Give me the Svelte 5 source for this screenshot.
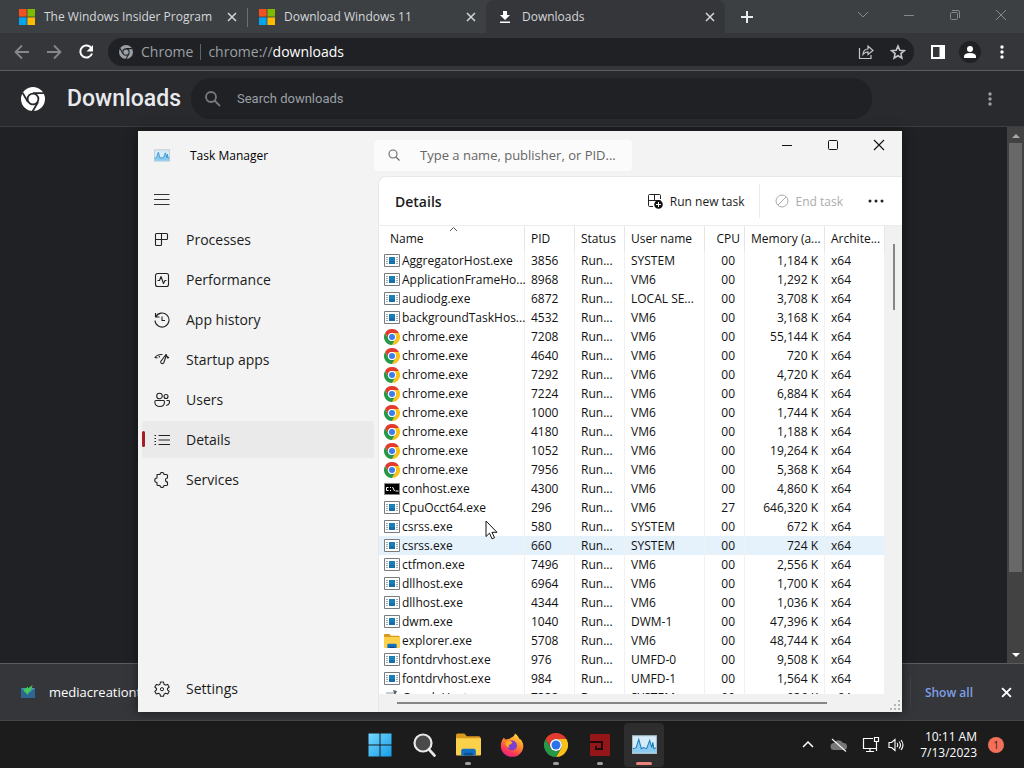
<script lang="ts">
	type Proc = { name: string; pid: string; user: string; cpu: string; mem: string; icon: string };

	const p = (name: string, pid: string, user: string, mem: string, icon = 'app', cpu = '00'): Proc => ({ name, pid, user, cpu, mem, icon });

	const processes: Proc[] = [
		p('AggregatorHost.exe', '3856', 'SYSTEM', '1,184 K'),
		p('ApplicationFrameHo...', '8968', 'VM6', '1,292 K'),
		p('audiodg.exe', '6872', 'LOCAL SE...', '3,708 K'),
		p('backgroundTaskHos...', '4532', 'VM6', '3,168 K'),
		p('chrome.exe', '7208', 'VM6', '55,144 K', 'chrome'),
		p('chrome.exe', '4640', 'VM6', '720 K', 'chrome'),
		p('chrome.exe', '7292', 'VM6', '4,720 K', 'chrome'),
		p('chrome.exe', '7224', 'VM6', '6,884 K', 'chrome'),
		p('chrome.exe', '1000', 'VM6', '1,744 K', 'chrome'),
		p('chrome.exe', '4180', 'VM6', '1,188 K', 'chrome'),
		p('chrome.exe', '1052', 'VM6', '19,264 K', 'chrome'),
		p('chrome.exe', '7956', 'VM6', '5,368 K', 'chrome'),
		p('conhost.exe', '4300', 'VM6', '4,860 K', 'console'),
		p('CpuOcct64.exe', '296', 'VM6', '646,320 K', 'app', '27'),
		p('csrss.exe', '580', 'SYSTEM', '672 K'),
		p('csrss.exe', '660', 'SYSTEM', '724 K'),
		p('ctfmon.exe', '7496', 'VM6', '2,556 K'),
		p('dllhost.exe', '6964', 'VM6', '1,700 K'),
		p('dllhost.exe', '4344', 'VM6', '1,036 K'),
		p('dwm.exe', '1040', 'DWM-1', '47,396 K'),
		p('explorer.exe', '5708', 'VM6', '48,744 K', 'folder'),
		p('fontdrvhost.exe', '976', 'UMFD-0', '9,508 K'),
		p('fontdrvhost.exe', '984', 'UMFD-1', '1,564 K'),
		p('GoogleHost.exe', '7332', 'SYSTEM', '936 K', 'file')
	];
	let hovered = $state(15);

	const pages = [
		{ label: 'Processes', d: 'M2.5 1.5h10q1 0 1 1v4q0 1-1 1h-5v5q0 1-1 1h-4q-1 0-1-1v-10q0-1 1-1zM1.5 7.5h6M7.5 1.5v6' },
		{ label: 'Performance', d: 'M3.5 1.5h9a2 2 0 0 1 2 2v9a2 2 0 0 1-2 2h-9a2 2 0 0 1-2-2v-9a2 2 0 0 1 2-2zM3.5 8.5h2l1.5-4 2.5 7 1.5-3h1.5' },
		{ label: 'App history', d: 'M1.5 1v4h4M1.7 5A7 7 0 1 1 1 8.5M8 4.5v4h3' },
		{ label: 'Startup apps', d: 'M.8 6C2 3.5 5 2.3 8.5 2.5M12 3.5l3 2.5M1 5.5l2.5.5M14.8 5.8l-2 .2M12 2.5L7.5 8.5a1.7 1.7 0 1 0 2.6 1.3L12.5 3zM5.5 4L5 5.5' },
		{ label: 'Users', d: 'M5.5 1.2a2.8 2.8 0 1 1 0 5.6 2.8 2.8 0 0 1 0-5.6zM12 2.5a2 2 0 1 1 0 4 2 2 0 0 1 0-4zM2 8.5h7.5q1 0 1 1.5c0 3-2 4.5-4.8 4.5S.8 13 .8 10q0-1.5 1.2-1.5zM12.5 8.5h2q1 0 1 1.2c0 2.4-1.5 3.8-3.5 3.6' },
		{ label: 'Details', d: 'M4.5 3.5H16M4.5 8H16M4.5 12.5H16M.5 3.5h1.5M.5 6.5h1.5M.5 9.5h1.5M.5 12.5h1.5' },
		{ label: 'Services', d: 'M3 2.5h3a2 2 0 0 1 4 0h2.5q1 0 1 1V6a1.8 1.8 0 0 0 0 4v2.5q0 1-1 1H10a2 2 0 0 1-4 0H4q-1 0-1-1V10.5a2.2 2.2 0 0 1 0-4.5z' }
	];
	let current = $state('Details');
</script>

<svelte:head>
	<title>Downloads</title>
</svelte:head>

{#snippet chromeLogo(red: string, yellow: string, green: string, ring: string, dot: string)}
	<path fill={red} d="M12 6h10.4A12 12 0 0 0 1.6 6l5.2 9A6 6 0 0 1 12 6z" />
	<path fill={yellow} d="M22.4 6A12 12 0 0 1 12 24l5.2-9A6 6 0 0 0 12 6z" />
	<path fill={green} d="M1.6 6A12 12 0 0 0 12 24l5.2-9a6 6 0 0 1-10.4 0z" />
	<circle cx="12" cy="12" r="6" fill={ring} />
	<circle cx="12" cy="12" r="4.5" fill={dot} />
{/snippet}

{#snippet chromeMono(ink: string, bg: string)}
	<circle cx="12" cy="12" r="12" fill={ink} />
	<path d="M12 6.2h11M6.9 15L1.5 5.6M17.1 15l-5.6 9.5" stroke={bg} stroke-width="1.8" />
	<circle cx="12" cy="12" r="5.4" fill={ink} stroke={bg} stroke-width="1.8" />
{/snippet}

{#snippet cross()}
	<svg width="10" height="10" viewBox="0 0 10 10"><path d="M1 1l8 8M9 1L1 9" stroke="currentColor" stroke-width="1.5" /></svg>
{/snippet}

{#snippet msLogo()}
	<svg width="16" height="16" viewBox="0 0 16 16">
		<path fill="#f25022" d="M0 0h7.6v7.6H0z" /><path fill="#7fba00" d="M8.4 0H16v7.6H8.4z" />
		<path fill="#00a4ef" d="M0 8.4h7.6V16H0z" /><path fill="#ffb900" d="M8.4 8.4H16V16H8.4z" />
	</svg>
{/snippet}

{#snippet folder(size: number)}
	<svg width={size} height={size} viewBox="0 0 24 24">
		<path fill="#d99a1c" d="M0 3q0-1.5 1.5-1.500H8L10.5 4H22q1.5 0 1.5 1.5V12H0z" />
		<path fill="#fbd04b" d="M0 6h24v15.5q0 1-1 1H1q-1 0-1-1z" />
		<path fill="#1270c4" d="M5 22.500V18q0-2 2-2h10q2 0 2 2v4.5z" />
		<path fill="#0a4f94" d="M8 20h8v2.500H8z" />
	</svg>
{/snippet}

{#snippet graph(w: number, h: number)}
	<svg width={w} height={h} viewBox="0 0 24 18">
		<path fill="#d6ecf8" stroke="#a8bccb" d="M.5.5h23v17H.5z" />
		<path fill="#8ccbf0" d="M1 17v-4l3-1 2.500-8L9 13l2-1 3 1 3-8 2 7 1-5 1 6 2-1v5z" />
		<path fill="none" stroke="#1b7fc0" d="M1 13l3-1 2.500-8L9 13l2-1 3 1 3-8 2 7 1-5 1 6 2-1" />
	</svg>
{/snippet}

{#snippet procIcon(kind: string)}
	{#if kind === 'chrome'}
		<svg width="16" height="16" viewBox="0 0 24 24">{@render chromeLogo('#e33b2e', '#fbc116', '#279847', '#fff', '#3b7ded')}</svg>
	{:else if kind === 'console'}
		<svg width="16" height="16" viewBox="0 0 16 16">
			<path fill="#000" stroke="#888" d="M.5 2.500h15v11H.5z" />
			<path fill="none" stroke="#fff" d="M4.500 6.500h-2v3h2M6.500 6v1M6.500 9v1M8.500 6l2 4M11.500 10h3" />
		</svg>
	{:else if kind === 'folder'}
		{@render folder(16)}
	{:else if kind === 'file'}
		<svg width="16" height="16" viewBox="0 0 16 16"><path fill="#c6ccd4" d="M2 2h10v12H2z" /><path fill="#59636f" d="M9 0l4 1-2 5z" /></svg>
	{:else}
		<svg width="16" height="16" viewBox="0 0 16 16">
			<path fill="#fff" stroke="#777c80" d="M.5 1.500h15v12H.5z" />
			<path stroke="#a3a7aa" d="M2 4.500h2M2 6.500h2M2 8.500h2M2 10.500h2M12 4.500h2M12 6.500h2M12 8.500h2M12 10.500h2" />
			<path fill="#1a7fb8" d="M5 4h6v7H5z" /><path fill="#156fa8" d="M5 8h6v3H5z" />
		</svg>
	{/if}
{/snippet}

<div class="desktop">
	<nav class="tabs" aria-label="Tabs">
		<div class="tab">
			{@render msLogo()}
			<a href="#insider">The Windows Insider Program</a>
			<button aria-label="Close tab">{@render cross()}</button>
		</div>
		<div class="tab divided">
			{@render msLogo()}
			<a href="#win11">Download Windows 11</a>
			<button aria-label="Close tab">{@render cross()}</button>
		</div>
		<div class="tab active">
			<svg width="16" height="16" viewBox="0 0 16 16"><path fill="#fff" d="M6 2h4v4h3L8 11 3 6h3zM3 12.500h10V14H3z" /></svg>
			<a href="#downloads">Downloads</a>
			<button aria-label="Close tab">{@render cross()}</button>
		</div>
		<button class="new-tab" aria-label="New tab">
			<svg width="12" height="12" viewBox="0 0 12 12"><path d="M6 0v12M0 6h12" stroke="currentColor" stroke-width="2" /></svg>
		</button>
		<div class="win-buttons">
			<button aria-label="Search tabs"><svg width="12" height="12" viewBox="0 0 12 12"><path d="M1 3l5 5 5-5" fill="none" stroke="currentColor" /></svg></button>
			<button aria-label="Minimize"><svg width="12" height="12" viewBox="0 0 12 12"><path d="M1 6.500h10" stroke="currentColor" /></svg></button>
			<button aria-label="Restore"><svg width="12" height="12" viewBox="0 0 12 12"><path d="M3 1.500h6q1.500 0 1.500 1.500v6M2.500 3.500h5q1 0 1 1v5q0 1-1 1h-5q-1 0-1-1v-5q0-1 1-1z" fill="none" stroke="currentColor" /></svg></button>
			<button aria-label="Close"><svg width="12" height="12" viewBox="0 0 12 12"><path d="M1 1l10 10M11 1L1 11" stroke="currentColor" /></svg></button>
		</div>
	</nav>

	<div class="toolbar">
		<button class="tool dim" aria-label="Back"><svg width="16" height="16" viewBox="0 0 16 16"><path d="M15 8H2M8 1.500L1.500 8 8 14.500" fill="none" stroke="currentColor" stroke-width="1.8" /></svg></button>
		<button class="tool dim" aria-label="Forward"><svg width="16" height="16" viewBox="0 0 16 16"><path d="M1 8h13M8 1.500L14.500 8 8 14.500" fill="none" stroke="currentColor" stroke-width="1.8" /></svg></button>
		<button class="tool" aria-label="Reload"><svg width="16" height="16" viewBox="0 0 16 16"><path d="M13.500 4.500A6 6 0 1 0 14 9.500" fill="none" stroke="currentColor" stroke-width="2" /><path fill="currentColor" d="M15 1v6.500H8.500z" /></svg></button>
		<div class="omnibox">
			<svg width="14" height="14" viewBox="0 0 24 24">{@render chromeMono('#9aa0a6', '#202124')}</svg>
			<span class="origin">Chrome</span>
			<label for="url">chrome://</label>
			<input id="url" value="downloads" />
			<button aria-label="Share"><svg width="16" height="16" viewBox="0 0 16 16"><path d="M1.500 4v10.500h11.500V11M5 10.500c.3-4 2-5.500 5-5.500V2l5 4.500-5 4V7.800c-2 0-3.500.7-5 2.700z" fill="none" stroke="currentColor" stroke-width="1.2" /></svg></button>
			<button aria-label="Bookmark"><svg width="16" height="16" viewBox="0 0 16 16"><path d="M8 2l1.800 4.200 4.500.4-3.400 3 1 4.400L8 11.700 4.100 14l1-4.400-3.400-3 4.500-.4z" fill="none" stroke="currentColor" stroke-width="1.6" /></svg></button>
		</div>
		<button class="tool" aria-label="Side panel"><svg width="14" height="14" viewBox="0 0 14 14"><path fill="currentColor" fill-rule="evenodd" d="M0 0h14v14H0zM2 2v10h6.500V2z" /></svg></button>
		<button class="tool" aria-label="Profile"><svg width="22" height="22" viewBox="0 0 22 22"><circle cx="11" cy="11" r="11" fill="#202124" /><circle cx="11" cy="8" r="3" fill="#fff" /><path fill="#fff" d="M5 17v-1.500q0-3.500 6-3.500t6 3.500V17z" /></svg></button>
		<button class="tool" aria-label="Menu"><svg width="4" height="14" viewBox="0 0 4 14"><g fill="currentColor"><circle cx="2" cy="2" r="1.7" /><circle cx="2" cy="7" r="1.7" /><circle cx="2" cy="12" r="1.7" /></g></svg></button>
	</div>

	<header class="page-head">
		<svg width="24" height="24" viewBox="0 0 24 24">{@render chromeMono('#fff', '#292a2d')}</svg>
		<h1>Downloads</h1>
		<div class="find">
			<svg width="16" height="16" viewBox="0 0 16 16"><path d="M6 1a5 5 0 1 1 0 10A5 5 0 0 1 6 1zM10 10l5 5" fill="none" stroke="#77797d" stroke-width="1.8" /></svg>
			<input aria-label="Search downloads" placeholder="Search downloads" />
		</div>
		<button class="more" aria-label="More actions"><svg width="4" height="14" viewBox="0 0 4 14"><g fill="currentColor"><circle cx="2" cy="2" r="1.7" /><circle cx="2" cy="7" r="1.7" /><circle cx="2" cy="12" r="1.7" /></g></svg></button>
	</header>

	<main class="page">
		<div class="page-scroll">
			<svg width="8" height="16" viewBox="0 0 8 16"><path fill="#a8a8a8" d="M0 11l4-4 4 4z" /></svg>
			<div class="page-thumb"></div>
			<svg width="8" height="16" viewBox="0 0 8 16"><path fill="#fff" d="M0 6h8l-4 4z" /></svg>
		</div>
	</main>

	<div class="shelf">
		<svg width="14" height="14" viewBox="0 0 14 14">
			<path fill="#4b91b8" d="M0 3h14v10H0z" /><path fill="#2d6791" d="M0 3l7 6 7-6v10H0z" />
			<path fill="#3ed04f" d="M11.500 0L7 3.500V1.500L2.500 5.500 7 10V7.500Q11 5 11.500 0z" />
		</svg>
		<a class="file" href="#file">mediacreationtool.exe</a>
		<button class="show-all">Show all</button>
		<button class="shelf-close" aria-label="Close"><svg width="11" height="11" viewBox="0 0 10 10"><path d="M1 1l8 8M9 1L1 9" stroke="currentColor" stroke-width="1.7" /></svg></button>
	</div>

	<footer class="taskbar">
		<div class="apps">
			<button aria-label="Start">
				<svg width="24" height="24" viewBox="0 0 24 24">
					<defs><linearGradient id="win" x1="0" y1="0" x2="1" y2="1"><stop offset="0" stop-color="#74d8ff" /><stop offset="1" stop-color="#159ce8" /></linearGradient></defs>
					<path fill="url(#win)" d="M.5.5h11v11H.5zM12.500.5h11v11h-11zM.5 12.500h11v11H.5zM12.500 12.500h11v11h-11z" />
				</svg>
			</button>
			<button aria-label="Search"><svg width="24" height="24" viewBox="0 0 24 24"><circle cx="11" cy="10" r="8.5" fill="#4a4a4a" stroke="#e8e8e8" stroke-width="2.2" /><path d="M17 16.500l5.500 6" stroke="#e8e8e8" stroke-width="2.6" stroke-linecap="round" /></svg></button>
			<button class="running" aria-label="File Explorer">{@render folder(25)}</button>
			<button aria-label="Firefox">
				<svg width="24" height="24" viewBox="0 0 24 24">
					<defs><linearGradient id="fox" x1=".8" y1="0" x2=".3" y2="1"><stop offset="0" stop-color="#ffe14a" /><stop offset=".4" stop-color="#ff9526" /><stop offset=".8" stop-color="#fb3558" /><stop offset="1" stop-color="#e3218c" /></linearGradient></defs>
					<path fill="url(#fox)" d="M15 .5c3 2 3.500 4 4.500 5.500q1.500.2 2 1.500c1 1.500 1.800 3.500 1.800 5.500a11.200 10.800 0 0 1-22.500 0C.8 9.500 2 6.500 4 4.500l1 2 4-.5c2-1.500 5-2 6-5.500z" />
					<circle cx="12" cy="12.5" r="5" fill="#7c3fd0" /><path fill="#ffab24" d="M5.500 9.500c3-2.500 6-1.500 7 0l-2 2-2 .5 1 2.500c-2 0-4-1.500-4-5z" />
				</svg>
			</button>
			<button class="running" aria-label="Chrome"><svg width="24" height="24" viewBox="0 0 24 24">{@render chromeLogo('#e33b2e', '#fbc116', '#279847', '#fff', '#2b72e8')}</svg></button>
			<button class="running" aria-label="OCCT"><svg width="22" height="24" viewBox="0 0 22 24"><path fill="#941619" d="M1 2q0-1 1-1h18q1 0 1 1v20q0 1-1 1H2q-1 0-1-1z" /><path fill="#1c0a0a" d="M1 8h13v9H6v-4h2v2h4v-5H1z" /></svg></button>
			<button class="running focused" aria-label="Task Manager">{@render graph(25, 19)}</button>
		</div>
		<div class="tray">
			<button aria-label="Hidden icons"><svg width="12" height="12" viewBox="0 0 12 12"><path d="M1 8l5-5 5 5" fill="none" stroke="#fff" stroke-width="1.5" /></svg></button>
			<button class="cloud" aria-label="OneDrive"><svg width="18" height="14" viewBox="0 0 18 14"><path fill="#777" d="M4 12a3.500 3.500 0 0 1 0-7 5 5 0 0 1 9 0 3.500 3.500 0 0 1 1 7z" /><path d="M2 1l14 12.500" stroke="#eee" stroke-width="1.2" /></svg></button>
			<button aria-label="Network"><svg width="18" height="18" viewBox="0 0 18 18"><path d="M11 2.500H1.500v10h13V9M8 12.500v3M4 15.500h8M12.500 1.500h4v4h-4zM14.500 6v9" fill="none" stroke="#fff" stroke-width="1.2" /></svg></button>
			<button aria-label="Volume"><svg width="16" height="16" viewBox="0 0 16 16"><path d="M1 5.500h2.500L7 2.500v11L3.500 10.500H1zM9 6q1.500 2 0 4M11 4.500q3 3.500 0 7M13 3q4 5 0 10" fill="none" stroke="#fff" stroke-width="1.1" /></svg></button>
			<div class="clock"><time>10:11 AM</time><time>7/13/2023</time></div>
			<span class="badge">1</span>
		</div>
	</footer>

	<section class="window" aria-label="Task Manager">
		<aside class="side">
			<div class="brand">{@render graph(16, 13)}<span>Task Manager</span></div>
			<button class="nav" aria-label="Toggle navigation"><svg width="16" height="16" viewBox="0 0 16 16"><path d="M0 2.500h15.500M0 7.500h15.500M0 12.500h15.500" stroke="#333" /></svg></button>
			{#each pages as page}
				<button class="nav" class:selected={page.label === current} onclick={() => current = page.label}>
					<svg width="16" height="16" viewBox="0 0 16 16"><path d={page.d} fill="none" stroke="#222" stroke-width="1.1" stroke-linejoin="round" /></svg>
					{page.label}
				</button>
			{/each}
			<button class="nav settings">
				<svg width="16" height="16" viewBox="0 0 16 16"><path d="M6.500 1h3l.5 2.200 1.500.9 2.200-.7 1.500 2.600L13.500 7.500v1.300l1.700 1.500-1.500 2.600-2.200-.7-1.500.9-.5 2.200h-3L6 13.100l-1.500-.9-2.200.7L.8 10.300l1.700-1.500V7.500L.8 6l1.500-2.600 2.200.7L6 3.200z" fill="none" stroke="#222" stroke-width="1.1" stroke-linejoin="round" /><circle cx="8" cy="8.2" r="1.6" fill="none" stroke="#222" /></svg>
				Settings
			</button>
		</aside>

		<div class="body">
			<div class="title-row">
				<div class="task-search">
					<svg width="12" height="12" viewBox="0 0 12 12"><path d="M5 1a4 4 0 1 1 0 8 4 4 0 0 1 0-8zM8 8l3.500 3.500" fill="none" stroke="#666" stroke-width="1.1" /></svg>
					<input aria-label="Search processes" placeholder="Type a name, publisher, or PID..." />
				</div>
				<div class="controls">
					<button aria-label="Minimize"><svg width="12" height="12" viewBox="0 0 12 12"><path d="M1 6.500h10" stroke="#111" /></svg></button>
					<button aria-label="Maximize"><svg width="12" height="12" viewBox="0 0 12 12"><rect x="1.5" y="1.5" width="9" height="9" rx="1" fill="none" stroke="#111" /></svg></button>
					<button aria-label="Close"><svg width="12" height="12" viewBox="0 0 12 12"><path d="M1 1l10 10M11 1L1 11" stroke="#111" stroke-width="1.1" /></svg></button>
				</div>
			</div>

			<div class="panel">
				<div class="panel-head">
					<h2>Details</h2>
					<button class="action">
						<svg width="16" height="16" viewBox="0 0 16 16"><path d="M13.500 6V2.500q0-1-1-1h-10q-1 0-1 1v10q0 1 1 1H6M1.500 7.500h6.500M7.500 1.500v6h6" fill="none" stroke="#222" /><circle cx="11.5" cy="11.5" r="4.3" fill="#111" /><path d="M11.500 9v5M9 11.500h5" stroke="#fff" /></svg>
						Run new task
					</button>
					<button class="action end" disabled>
						<svg width="14" height="14" viewBox="0 0 14 14"><circle cx="7" cy="7" r="6" fill="none" stroke="#aaa" /><path d="M3 11l8-8" stroke="#aaa" /></svg>
						End task
					</button>
					<button class="dots" aria-label="See more"><svg width="16" height="4" viewBox="0 0 16 4"><g fill="#222"><circle cx="2" cy="2" r="1.5" /><circle cx="8" cy="2" r="1.5" /><circle cx="14" cy="2" r="1.5" /></g></svg></button>
				</div>

				<div class="list">
					<div class="rows">
						<table>
							<colgroup>
								<col class="c-name" /><col class="c-pid" /><col class="c-pid" /><col class="c-user" /><col class="c-cpu" /><col class="c-user" /><col class="c-arch" />
							</colgroup>
							<thead>
								<tr>
									<th>
										<svg class="caret" width="9" height="6" viewBox="0 0 9 6"><path d="M1 5l3.500-3.500L8 5" fill="none" stroke="#555" /></svg>
										Name
									</th>
									<th>PID</th><th>Status</th><th>User name</th><th class="num">CPU</th><th>Memory (a...</th><th>Archite...</th>
								</tr>
							</thead>
							<tbody>
								{#each processes as proc, i}
									<tr class:hovered={i === hovered} onmouseenter={() => hovered = i}>
										<td><span class="proc">{@render procIcon(proc.icon)}{proc.name}</span></td>
										<td>{proc.pid}</td>
										<td>Run...</td>
										<td>{proc.user}</td>
										<td class="cpu">{proc.cpu}</td>
										<td class="num">{proc.mem}</td>
										<td>x64</td>
									</tr>
								{/each}
							</tbody>
						</table>
					</div>
					<div class="v-scroll"><div></div></div>
					<div class="h-scroll"><div></div></div>
					<svg class="grip" width="10" height="10" viewBox="0 0 10 10"><path fill="#b5b5b5" d="M8 0h2v2H8zM4 4h2v2H4zM8 4h2v2H8zM0 8h2v2H0zM4 8h2v2H4zM8 8h2v2H8z" /></svg>
				</div>
			</div>
		</div>

		<svg class="pointer" width="13" height="20" viewBox="0 0 13 20"><path fill="#fff" stroke="#111" d="M1 1v15.500l3.500-3.300 2.500 5.600 2.500-1.100-2.500-5.400H12z" /></svg>
	</section>
</div>

<style>
	:global(body) { background: #202124; }
	.desktop {
		position: relative; overflow: hidden; height: 100vh; min-height: 560px;
		display: grid; grid-template-rows: 33px 38px 56px 1fr 58px 47px;
		grid-template-columns: minmax(0,1fr);
		font-family: "Open Sans", "Noto Sans", sans-serif; font-size: 12px;
		background: #202124; color: #e8eaed;
	}
	.desktop * { box-sizing: border-box; }
	button { border: none; background: none; padding: 0; margin: 0; font: inherit; color: inherit; display: flex; align-items: center; justify-content: center; }
	input { border: none; background: none; padding: 0; margin: 0; font: inherit; color: inherit; outline: none; min-width: 0; flex: 1; }
	a { color: inherit; text-decoration: none; }
	svg { display: block; flex: none; }

	/* Browser */
	.tabs { display: flex; background: #3c4043; padding-left: 8px; }
	.tab { width: 239px; display: flex; align-items: center; gap: 9px; padding: 0 10px 0 11px; color: #d5d7da; }
	.tab a { flex: 1; white-space: nowrap; }
	.divided { border-left: 1px solid; border-image: linear-gradient(transparent 25%, #6b6f73 25%, #6b6f73 80%, transparent 80%) 1; }
	.active { background: #35363a; border-radius: 8px 8px 0 0; }
	.new-tab { width: 44px; }
	.win-buttons { margin-left: auto; display: flex; color: #85898c; height: 29px; }
	.win-buttons button { width: 46px; }

	.toolbar { display: flex; align-items: center; background: #35363a; border-bottom: 1px solid #5b5c60; padding: 0 6px; }
	.tool { width: 32px; height: 28px; color: #fff; }
	.dim { color: #85878a; }
	.omnibox {
		flex: 1; min-width: 0; height: 28px; margin: 0 8px 0 6px; padding: 0 0 0 11px; border-radius: 14px;
		background: #202124; display: flex; align-items: center; color: #9aa0a6; font-size: 14px;
	}
	.origin { margin: 0 7px 0 8px; padding-right: 7px; border-right: 1px solid #5f6368; line-height: 16px; }
	.omnibox input { color: #fff; }
	.omnibox button { width: 32px; color: #c4c7ca; }

	.page-head { display: flex; align-items: center; background: #292a2d; border-bottom: 1px solid #3c3d40; padding: 0 32px 0 21px; font-family: Roboto, sans-serif; }
	.page-head h1 { margin: 0 12px 0 22px; font-size: 23px; font-weight: 500; width: 112px; white-space: nowrap; color: #e8eaed; }
	.find { flex: 1; max-width: 681px; height: 41px; border-radius: 20px; background: #202124; display: flex; align-items: center; gap: 16px; padding: 0 14px; }
	.find input { font-size: 13px; }
	.find input::placeholder { color: #9aa0a6; opacity: 1; }
	.more { margin-left: auto; color: #9aa0a6; }

	.page { display: flex; justify-content: flex-end; min-height: 0; }
	.page-scroll { width: 17px; background: #424242; display: flex; flex-direction: column; align-items: center; }
	.page-thumb { width: 13px; height: 80%; background: #686868; margin-bottom: auto; }

	.shelf { display: flex; align-items: center; background: #35363a; border-top: 1px solid #5b5c60; border-bottom: 1px solid #444548; padding: 0 12px 0 21px; }
	.file { margin-left: 14px; font-size: 13px; color: #fff; flex: 1; }
	.show-all { color: #7e9fe6; font-weight: 600; padding-left: 14px; border-left: 1px solid #3f4043; height: 32px; }
	.shelf-close { margin-left: 28px; color: #fff; }

	/* Taskbar */
	.taskbar { display: grid; grid-template-columns: 1fr auto 1fr; align-items: center; background: #1c1c1c; }
	.apps { grid-column: 2; display: flex; }
	.apps button { width: 44px; height: 44px; position: relative; border-radius: 4px; }
	.running::after { content: ""; position: absolute; bottom: 2px; width: 6px; height: 3px; border-radius: 2px; background: #a0a0a0; }
	.apps .focused { width: 40px; margin: 0 2px; background: #2e2e2e; }
	.apps .focused::after { width: 16px; background: #e8847c; }
	.tray { display: flex; align-items: center; justify-content: flex-end; gap: 8px; padding-right: 20px; }
	.cloud { margin: 0 6px 0 8px; }
	.clock { display: flex; flex-direction: column; align-items: flex-end; font-size: 12px; line-height: 16px; color: #fff; margin: 0 3px 0 8px; }
	.badge { width: 16px; height: 16px; border-radius: 8px; background: #f0705a; color: #44150e; font-size: 10px; line-height: 16px; text-align: center; }

	/* Task Manager window */
	.window {
		position: absolute; top: 131px; right: 122px; bottom: 56px; left: 138px;
		display: grid; grid-template-columns: 236px minmax(0,1fr); grid-template-rows: minmax(0,1fr);
		background: #f3f3f3; color: #1b1b1b; box-shadow: 0 0 10px rgba(0,0,0,0.5);
	}
	.side { display: flex; flex-direction: column; gap: 3px; padding: 0 0 5px 4px; }
	.brand { display: flex; align-items: center; gap: 20px; height: 47px; padding: 2px 0 0 12px; color: #000; }
	.nav { height: 37px; justify-content: flex-start; gap: 16px; padding-left: 12px; font-size: 14px; position: relative; border-radius: 3px; }
	.selected { background: #eaeaea; }
	.selected::before { content: ""; position: absolute; left: 0; top: 10px; width: 3px; height: 16px; border-radius: 2px; background: #a51d23; }
	.settings { margin-top: auto; }

	.body { display: grid; grid-template-rows: 45px minmax(0,1fr); min-width: 0; }
	.title-row { display: flex; align-items: center; justify-content: space-between; }
	.task-search { width: 258px; height: 31px; margin-top: 3px; background: #fbfbfb; border-radius: 4px; display: flex; align-items: center; gap: 20px; padding: 0 14px; font-size: 13px; }
	.task-search input::placeholder { color: #666; opacity: 1; }
	.controls { display: flex; align-self: flex-start; height: 28px; }
	.controls button { width: 46px; }

	.panel { margin-left: 4px; border: 1px solid #e8e8e8; border-width: 1px 0 0 1px; border-radius: 8px 0 0 0; background: #fff; display: grid; grid-template-rows: 49px minmax(0,1fr); overflow: hidden; }
	.panel-head { display: flex; align-items: center; padding: 0 18px 0 16px; border-bottom: 1px solid #ececec; }
	h2 { margin: 0 auto 0 0; font-size: 14px; font-weight: 600; }
	.action { gap: 7px; height: 34px; padding-right: 14px; }
	.end { color: #acacac; border-left: 1px solid #ebebeb; padding: 0 25px 0 15px; }

	.list { display: grid; grid-template-columns: minmax(0,1fr) 17px; grid-template-rows: minmax(0,1fr) 18px; background: #f1f1f1; }
	.rows { overflow: hidden; background: #fff; }
	table { width: 100%; table-layout: fixed; border-collapse: separate; border-spacing: 0; color: #111; }
	.c-name { width: 146px; }
	.c-pid { width: 50px; }
	.c-user { width: 80px; }
	.c-cpu { width: 40px; }
	.c-arch { width: auto; }
	th { position: relative; height: 25px; padding: 0 4px 0 6px; font-weight: 400; text-align: left; border-right: 1px solid #e6e6e6; white-space: nowrap; }
	th:first-child { padding-left: 11px; }
	.caret { position: absolute; top: 0; left: 70px; }
	td { height: 19px; line-height: 19px; padding: 0 6px; border-right: 1px solid #f1f1f1; white-space: nowrap; }
	td:first-child { padding: 0 0 0 5px; }
	.num { text-align: right; }
	.cpu { text-align: right; padding-right: 9px; }
	.proc { display: flex; align-items: center; gap: 2px; height: 19px; }
	.hovered td { background: #e5f1fb; }

	.v-scroll { padding-top: 18px; display: flex; justify-content: center; }
	.v-scroll div { width: 2px; height: 66px; background: #858585; }
	.h-scroll { display: flex; align-items: center; padding: 0 58px 0 18px; }
	.h-scroll div { flex: 1; height: 2px; background: #858585; }
	.grip { align-self: end; justify-self: end; margin: 0 2px 2px 0; }

	.pointer { position: absolute; left: 347px; top: 389px; }
</style>
